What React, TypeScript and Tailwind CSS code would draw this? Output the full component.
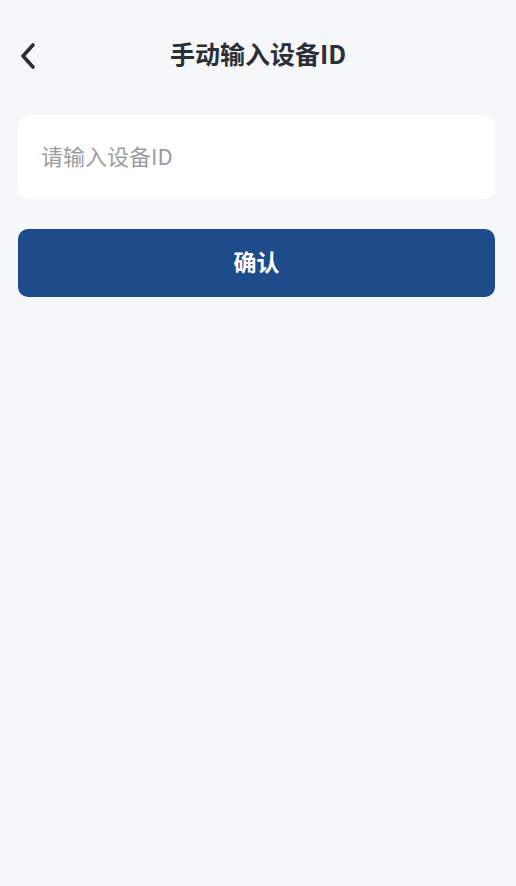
import React from 'react';

export default function App() {
  return (
    <div
      className="min-h-[886px] w-full bg-[#f6f7f9] text-[#2b2f36]"
      style={{ fontFamily: '"Noto Sans CJK SC", "Noto Sans", sans-serif' }}
    >
      <header className="relative flex h-[110px] items-start justify-center pt-[38px]">
        <button className="absolute left-[14px] top-[38px] flex h-[36px] w-[28px] items-center justify-center">
          <svg width="18" height="26" viewBox="0 0 18 26" fill="none">
            <path d="M14 2 L4 13 L14 24" stroke="#2b2f36" strokeWidth="3.6" strokeLinecap="round" strokeLinejoin="round" />
          </svg>
        </button>
        <h1 className="h-[30px] text-[25px] font-bold leading-[30px]">手动输入设备ID</h1>
      </header>

      <main className="flex flex-col gap-[30px] pl-[18px] pr-[21px] pt-[5px]">
        <div className="flex h-[84px] items-center rounded-[12px] bg-white px-[23px] pb-[3px]">
          <input
            className="w-full bg-transparent text-[22px] text-[#2b2f36] outline-none placeholder:text-[#9a9ca1]"
            placeholder="请输入设备ID"
          />
        </div>
        <button className="flex h-[68px] items-center justify-center rounded-[10px] bg-[#1e4c8b] pb-[3px] text-[23px] font-bold text-white">
          确认
        </button>
      </main>
    </div>
  );
}
